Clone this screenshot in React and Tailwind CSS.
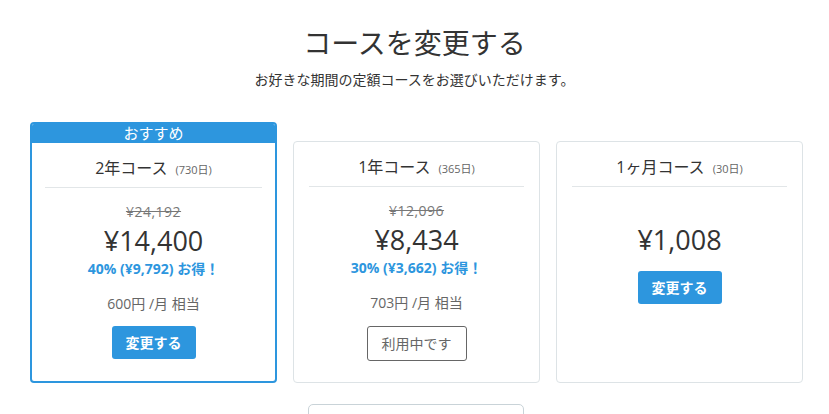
import React from 'react';

const plans = [
  {
    name: '2年コース',
    days: '730日',
    listPrice: '¥24,192',
    price: '¥14,400',
    saving: '40% (¥9,792) お得！',
    monthly: '600円 /月 相当',
    recommended: true,
    current: false,
  },
  {
    name: '1年コース',
    days: '365日',
    listPrice: '¥12,096',
    price: '¥8,434',
    saving: '30% (¥3,662) お得！',
    monthly: '703円 /月 相当',
    recommended: false,
    current: true,
  },
  {
    name: '1ヶ月コース',
    days: '30日',
    price: '¥1,008',
    recommended: false,
    current: false,
  },
];

const PlanCard = ({ plan }) => {
  const body = (
    <div className="flex flex-col items-center h-[240px]">
      {/* Header */}
      <div className="w-full px-[15px]">
        <div className="flex items-baseline justify-center pt-[13px] pb-[7px] border-b border-[#e2e6e8]">
          <span className="text-[16px] leading-[24px] text-[#333]">{plan.name}</span>
          <span className="ml-[8px] text-[11px] text-[#666]">({plan.days})</span>
        </div>
      </div>

      {/* Price */}
      <div className="mt-[14px] h-[20px] text-[14px] leading-[20px] tracking-[0.5px] text-[#777] line-through">
        {plan.listPrice}
      </div>
      <div className="text-[27px] leading-[38px] text-[#333]">{plan.price}</div>

      {plan.saving && (
        <>
          <div className="text-[14px] leading-[18px] font-bold text-[#2d96de]">{plan.saving}</div>
          <div className="mt-[16px] text-[14px] leading-[20px] text-[#666]">{plan.monthly}</div>
        </>
      )}

      {/* Action */}
      {plan.current ? (
        <button className="mt-[13px] h-[35px] px-[14px] border border-[#666] rounded-[3px] text-[14px] text-[#666] bg-white">
          利用中です
        </button>
      ) : (
        <button className="mt-[12px] h-[33px] w-[84px] rounded-[3px] bg-[#2d96de] text-white text-[14px] font-bold">
          変更する
        </button>
      )}
    </div>
  );

  if (plan.recommended) {
    return (
      <div className="w-[247px] border-2 border-[#2d96de] rounded-[4px] bg-white overflow-hidden">
        <div className="h-[19px] bg-[#2d96de] text-white text-[15px] leading-[19px] text-center">おすすめ</div>
        <div className="-mx-[2px] -mb-[2px]">{body}</div>
      </div>
    );
  }

  return (
    <div className="w-[247px] border border-[#dde3e6] rounded-[4px] bg-white">
      {body}
    </div>
  );
};

export default function App() {
  return (
    <div
      className="w-[829px] h-[414px] overflow-hidden bg-white"
      style={{ fontFamily: '"Open Sans", "Noto Sans CJK JP", sans-serif' }}
    >
      <div className="flex flex-col items-center pt-[24px]">
        <h1 className="text-[28px] leading-[38px] text-[#333]">コースを変更する</h1>
        <p className="mt-[6px] text-[14px] leading-[24px] text-[#333]">お好きな期間の定額コースをお選びいただけます。</p>
      </div>

      <div className="flex items-end gap-4 pl-[30px] mt-[30px]">
        {plans.map((plan) => (
          <PlanCard key={plan.name} plan={plan} />
        ))}
      </div>

      <div className="mt-[21px] ml-[308px] w-[216px] h-[40px] border border-[#c9d3d8] rounded-[5px]" />
    </div>
  );
}
